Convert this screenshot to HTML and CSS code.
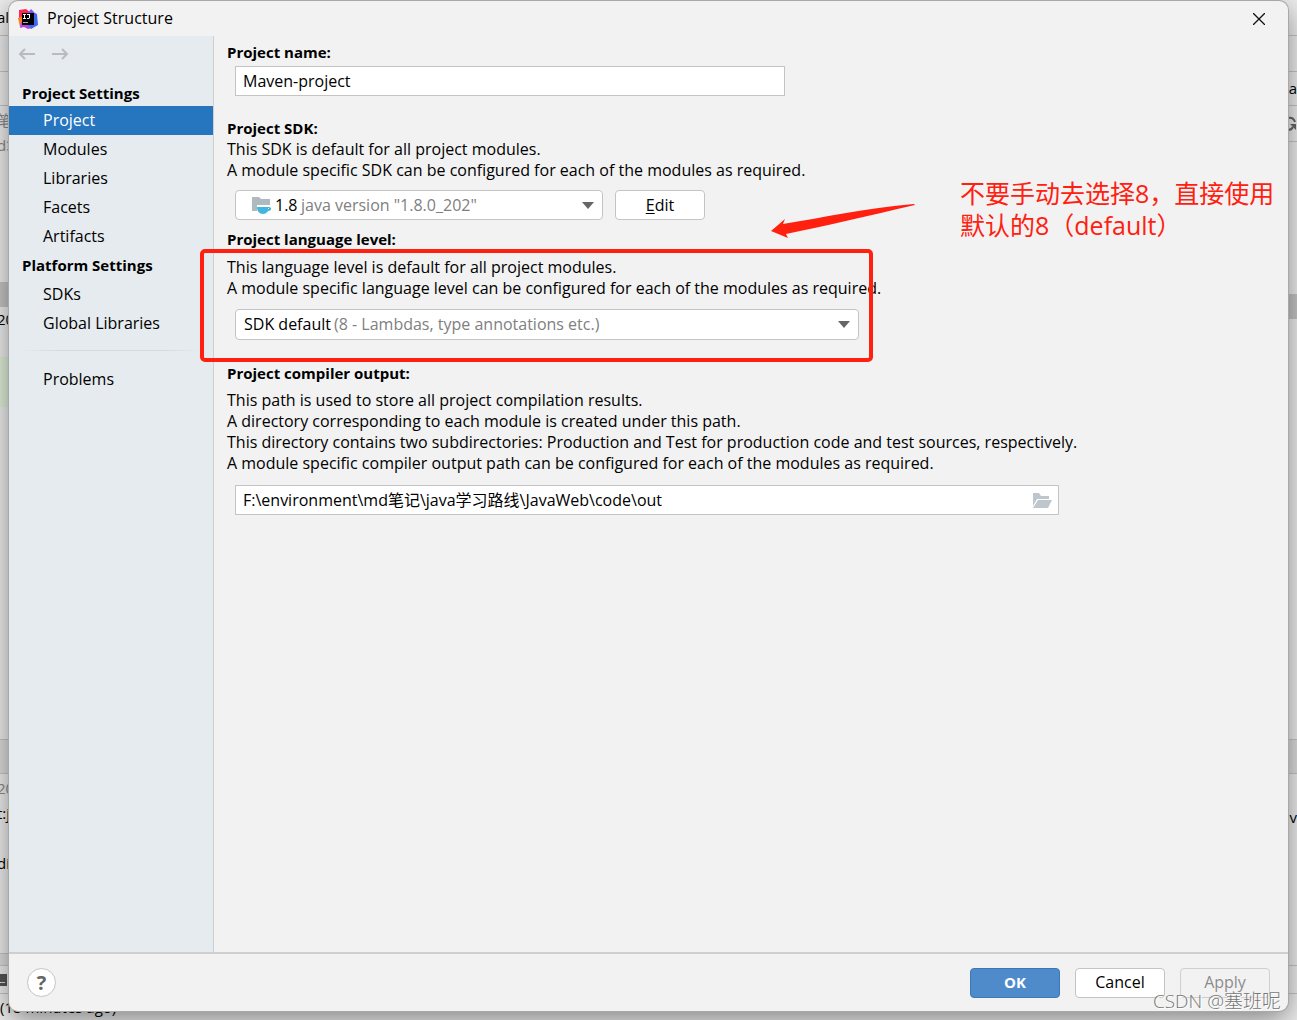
FILE: index.html
```html
<!DOCTYPE html>
<html lang="en">
<head>
  <meta charset="UTF-8" />
  <meta name="viewport" content="width=device-width, initial-scale=1.0"/>
  <title>Project Structure</title>
  <link rel="stylesheet" href="styles.css">
</head>
<body>
  <!-- IDE window behind the dialog -->
  <div class="ide" aria-hidden="true">
    <div class="edges">
      <div class="edge left">
        <div class="strip menu">al</div>
        <div class="strip nav"></div>
        <div class="strip nav"></div>
        <div class="strip tree"><span>笔</span><span>d笔</span></div>
        <div class="strip scroll"></div>
        <div class="strip row">20</div>
        <div class="strip changed"></div>
        <div class="strip rest"></div>
        <div class="strip band"></div>
        <div class="strip log"><span class="dim">20</span><span>t:j</span><span></span><span>di</span></div>
        <div class="strip line"></div>
        <div class="strip tools"><svg width="9" height="14" viewBox="0 0 9 14"><path d="M0 1h7v12H0z" fill="#555"/><path d="M0 9h5v1H0z" fill="#ddd"/></svg></div>
      </div>
      <div class="edge right">
        <div class="strip menu"></div>
        <div class="strip nav"></div>
        <div class="strip nav"><span>Ma</span></div>
        <div class="strip refresh"><svg width="9" height="16" viewBox="0 0 9 16"><path d="M0 2c4-1 6 1 7 4M0 14c2 0 4-1 5-3" fill="none" stroke="#666" stroke-width="2"/><path d="M2 8h6v6z" fill="#666"/></svg></div>
        <div class="strip gap"></div>
        <div class="strip scroll"></div>
        <div class="strip rest"></div>
        <div class="strip band"></div>
        <div class="strip log"><span></span><span>nv</span></div>
        <div class="strip tools"></div>
      </div>
    </div>
    <div class="status">(18 minutes ago)</div>
  </div>

  <div class="dialog" role="dialog" aria-labelledby="title">
    <header class="titlebar">
      <svg class="logo" width="20" height="20" viewBox="0 0 20 20">
        <path d="M1 1l7-1 5 4-6 8-6-3z" fill="#fe2857"/>
        <path d="M0 9l5-2 3 9-6 2z" fill="#fc801d"/>
        <path d="M2 19l1-6 10 2 1 4-4 1-4-2z" fill="#b743e8"/>
        <path d="M13 2l6 3 1 11-7 4-3-4z" fill="#3b6cf0"/>
        <path d="M10 4l3-4 3 3 1 4-6-1z" fill="#7f52ff"/>
        <path d="M4 4h12v12H4z" fill="#000"/>
        <path d="M5 5h3v1H7v3h1v1H5V9h1V6H5zM9 5h3v4l-1 1H9V9h2V6H9z" fill="#fff"/>
        <path d="M5 13h5v1H5z" fill="#aaa"/>
      </svg>
      <h1 id="title">Project Structure</h1>
      <button class="close" aria-label="Close">
        <svg width="12" height="12" viewBox="0 0 12 12"><path d="M0 0l12 12M12 0L0 12" stroke="#111" stroke-width="1.3"/></svg>
      </button>
    </header>

    <div class="content">
      <nav class="sidebar">
        <div class="history">
          <button aria-label="Back"><svg width="17" height="12" viewBox="0 0 17 12"><path d="M6 1L1 6l5 5M1 6h15" fill="none" stroke="#bbb" stroke-width="2"/></svg></button>
          <button aria-label="Forward"><svg width="17" height="12" viewBox="0 0 17 12"><path d="M10 1l5 5-5 5M15 6H0" fill="none" stroke="#bbb" stroke-width="2"/></svg></button>
        </div>
        <h2>Project Settings</h2>
        <a href="#" class="active">Project</a>
        <a href="#">Modules</a>
        <a href="#">Libraries</a>
        <a href="#">Facets</a>
        <a href="#">Artifacts</a>
        <h2>Platform Settings</h2>
        <a href="#">SDKs</a>
        <a href="#">Global Libraries</a>
        <hr>
        <a href="#">Problems</a>
      </nav>

      <main class="form">
        <section class="group">
          <label class="heading" for="name">Project name:</label>
          <input class="field name" id="name" type="text" value="Maven-project">
        </section>

        <section class="group sdk">
          <label class="heading" for="sdk">Project SDK:</label>
          <p>This SDK is default for all project modules.<br>A module specific SDK can be configured for each of the modules as required.</p>
          <div class="controls">
            <div class="combo jdk">
              <svg width="20" height="18" viewBox="0 0 20 18">
                <path d="M0 1h7l2 2h9v6H5v6H0z" fill="#afb9c0"/>
                <path d="M5 11h12c3 0 3 4-1 4-1 2-3 3-5 3-4 0-6-3-6-7z" fill="#40b6e0"/>
                <path d="M16 12h1v1h-1z" fill="#fff"/>
              </svg>
              <select id="sdk"><option>1.8</option></select>
              <span class="hint">java version "1.8.0_202"</span>
              <svg class="arrow" width="12" height="7" viewBox="0 0 12 7"><path d="M0 0h12L6 7z" fill="#666"/></svg>
            </div>
            <button class="btn"><u>E</u>dit</button>
          </div>
        </section>

        <section class="group level">
          <label class="heading" for="level">Project language level:</label>
          <p>This language level is default for all project modules.<br>A module specific language level can be configured for each of the modules as required.</p>
          <div class="combo lang">
            <select id="level"><option>SDK default</option></select>
            <span class="hint">(8 - Lambdas, type annotations etc.)</span>
            <svg class="arrow" width="12" height="7" viewBox="0 0 12 7"><path d="M0 0h12L6 7z" fill="#666"/></svg>
          </div>
        </section>

        <section class="group output">
          <label class="heading" for="output">Project compiler output:</label>
          <p>This path is used to store all project compilation results.<br>A directory corresponding to each module is created under this path.<br>This directory contains two subdirectories: Production and Test for production code and test sources, respectively.<br>A module specific compiler output path can be configured for each of the modules as required.</p>
          <div class="field path">
            <input id="output" type="text" value="F:\environment\md笔记\java学习路线\JavaWeb\code\out">
            <button aria-label="Browse"><svg width="19" height="15" viewBox="0 0 19 15"><path d="M0 0h6l2 3h8v3H4l-4 7z" fill="#afb9c0"/><path d="M5 7h14l-4 8H0z" fill="#afb9c0"/></svg></button>
          </div>
        </section>
      </main>
    </div>

    <footer class="footer">
      <button class="help" aria-label="Help">?</button>
      <button class="btn primary">OK</button>
      <button class="btn">Cancel</button>
      <button class="btn" disabled>Apply</button>
    </footer>
  </div>

  <!-- Notes on top -->
  <div class="frame"></div>
  <svg class="pointer" width="145" height="35" viewBox="0 0 145 35"><path d="M0 28L14 16l-2 5C50 15 95 5 143 1l1 1C100 12 55 23 15 31l2 4z" fill="#ff2010"/></svg>
  <div class="note" lang="zh">不要手动去选择8，直接使用<br>默认的8（default）</div>
  <div class="watermark">CSDN @塞班呢</div>
</body>
</html>
```
FILE: styles.css
```css
* {
  margin: 0;
  padding: 0;
  box-sizing: border-box;
}

body, html {
  height: 100%;
  overflow: hidden;
}

body {
  position: relative;
  font-family: "Open Sans", "Noto Sans CJK SC", sans-serif;
  font-size: 16px;
  line-height: 21px;
  color: #000;
}

button, input, select {
  font: inherit;
  color: inherit;
  border: none;
  background: none;
}

svg {
  display: block;
  flex: none;
}

/* window behind */
.ide {
  height: 100%;
  display: flex;
  flex-direction: column;
  background: #ececec;
}

.edges {
  flex: 1;
  display: flex;
  justify-content: space-between;
}

.edge {
  width: 9px;
  display: flex;
  flex-direction: column;
  overflow: hidden;
  font-size: 15px;
}

.strip {
  display: flex;
  flex-direction: column;
  justify-content: center;
  white-space: nowrap;
  border-bottom: 1px solid #c4c4c4;
}

.left .strip { text-indent: -3px; }
.right .strip { align-items: flex-end; }

.menu, .nav { height: 36px; }
.nav + .nav { height: 34px; }
.tree {
  height: 176px;
  justify-content: flex-start;
  padding-top: 2px;
  line-height: 25px;
  color: #888;
  border: none;
}
.scroll {
  height: 25px;
  background: #c4c4c4;
  border: none;
}
.row {
  height: 50px;
  justify-content: flex-start;
  padding-top: 2px;
  border: none;
}
.changed {
  height: 50px;
  background: #dfeed8;
  border: none;
}
.rest { flex: 1; }
.band {
  height: 34px;
  background: #dcdcdc;
}
.log {
  height: 180px;
  justify-content: flex-start;
  padding-top: 2px;
  line-height: 25px;
}
.log span { height: 25px; }
.dim { color: #888; }
.line {
  height: 12px;
  background: #dcdcdc;
}
.tools { height: 28px; }
.right .log { height: 192px; padding-top: 6px; }
.refresh { height: 36px; }
.gap { height: 152px; border: none; }

.status {
  height: 26px;
  font-size: 15px;
  line-height: 26px;
  white-space: nowrap;
}

/* dialog */
.dialog {
  position: absolute;
  top: 1px;
  right: 9px;
  bottom: 9px;
  left: 9px;
  display: flex;
  flex-direction: column;
  overflow: hidden;
  background: #f2f2f2;
  border-radius: 9px;
  box-shadow: 0 0 0 1px #a8a8a8, 0 8px 28px rgba(0, 0, 0, 0.45);
}

.titlebar {
  flex: none;
  height: 35px;
  display: flex;
  align-items: center;
  gap: 9px;
  padding: 0 23px 0 9px;
}

.titlebar h1 {
  flex: 1;
  font-size: 16px;
  font-weight: normal;
}

.close {
  width: 12px;
  height: 12px;
}

.content {
  flex: 1;
  display: flex;
  min-height: 0;
}

.sidebar {
  width: 205px;
  flex: none;
  background: #e6ebef;
  border-right: 1px solid #cfcfcf;
}

.history {
  height: 45px;
  display: flex;
  gap: 16px;
  padding: 12px 0 0 10px;
}

.history button {
  width: 17px;
  height: 12px;
}

.sidebar h2 {
  font-size: 15px;
  line-height: 29px;
  padding-left: 13px;
}

.sidebar a {
  display: block;
  height: 29px;
  line-height: 28px;
  padding-left: 34px;
  color: #000;
  text-decoration: none;
}

.sidebar .history + h2 { line-height: 25px; }

.sidebar .active {
  background: #2675bf;
  color: #fff;
}

.sidebar hr {
  height: 1px;
  margin: 12px 12px 14px;
  border: none;
  background: linear-gradient(to right, #e6ebef, #d6dade 20%, #d6dade 80%, #e6ebef);
}

.form {
  flex: 1;
  min-width: 0;
  padding: 6px 13px;
}

.group {
  display: flex;
  flex-direction: column;
  align-items: flex-start;
}

.heading {
  font-size: 15px;
  font-weight: bold;
}

.field {
  height: 30px;
  max-width: 100%;
  margin-left: 8px;
  padding: 0 7px;
  background: #fff;
  border: 1px solid #c4c4c4;
}

.name {
  width: 550px;
  margin-top: 3px;
}

.sdk { margin-top: 22px; }

.controls {
  display: flex;
  gap: 12px;
  margin-top: 9px;
}

.combo {
  height: 30px;
  max-width: 100%;
  display: flex;
  align-items: center;
  gap: 3px;
  margin-left: 8px;
  padding: 0 8px;
  background: #fff;
  border: 1px solid #c4c4c4;
  border-radius: 4px;
}

.combo select {
  appearance: none;
}

.hint {
  flex: 1;
  color: #808080;
}

.jdk { width: 368px; padding-left: 16px; }
.lang { width: 624px; height: 31px; margin-top: 10px; }

.level { margin-top: 9px; }
.level p { margin-top: 7px; }

.output { margin-top: 23px; }
.output p { margin-top: 6px; }

.path {
  width: 824px;
  margin-top: 11px;
  padding-right: 6px;
  display: flex;
  align-items: center;
}

.path input {
  flex: 1;
}

.path button {
  width: 19px;
  height: 15px;
  opacity: 0.8;
}

.btn {
  width: 90px;
  height: 30px;
  background: #fff;
  border: 1px solid #c4c4c4;
  border-radius: 4px;
}

.btn u { text-underline-offset: 2px; }

.btn:disabled {
  background: #f2f2f2;
  border-color: #cfcfcf;
  color: #8c8c8c;
}

.primary {
  background: #4f8bcb;
  border-color: #3c78b8;
  color: #fff;
  font-size: 15px;
  font-weight: bold;
}

.footer {
  flex: none;
  height: 59px;
  display: flex;
  align-items: center;
  gap: 15px;
  padding: 0 18px;
  border-top: 2px solid #cfcfcf;
}

.help {
  width: 29px;
  height: 29px;
  margin-right: auto;
  background: #fff;
  border: 1px solid #c4c4c4;
  border-radius: 50%;
  color: #666;
  font-size: 20px;
  font-weight: bold;
}

/* notes */
.frame {
  position: absolute;
  top: 249px;
  left: 200px;
  width: 673px;
  height: 113px;
  border: 4px solid #ff2010;
  border-radius: 5px;
  pointer-events: none;
}

.pointer {
  position: absolute;
  top: 203px;
  left: 771px;
}

.note {
  position: absolute;
  top: 177px;
  left: 960px;
  font-size: 25px;
  line-height: 32px;
  white-space: nowrap;
  color: #ff2010;
}

.watermark {
  position: absolute;
  right: 16px;
  bottom: 6px;
  font-size: 19px;
  font-weight: 300;
  line-height: 26px;
  color: #777;
  text-shadow: 1px 1px 0 #fff;
}
```
